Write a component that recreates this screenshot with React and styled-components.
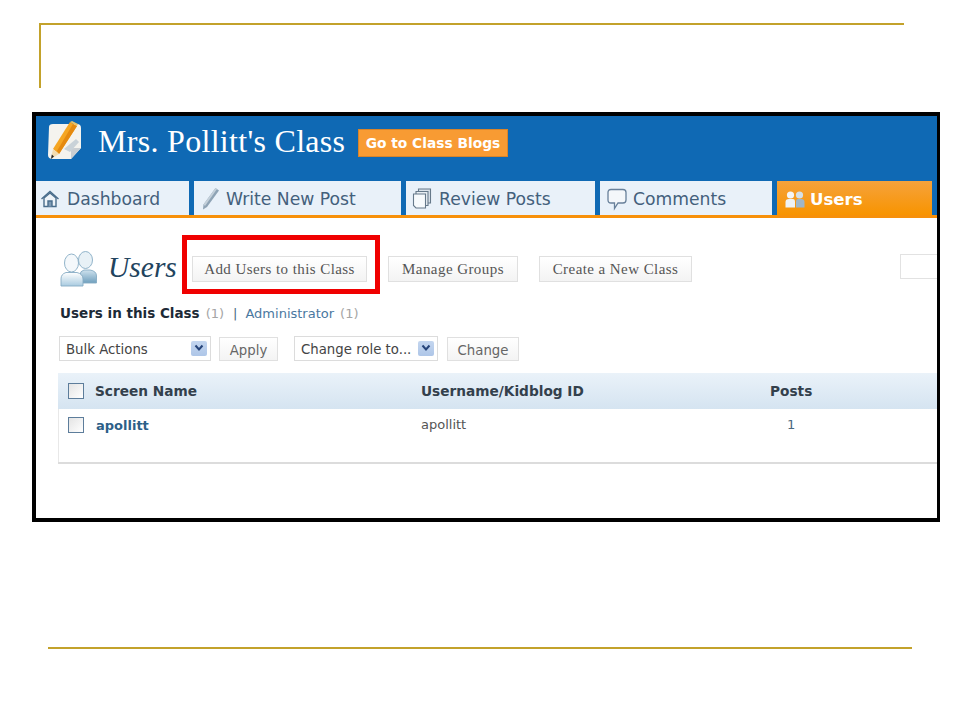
import React from 'react';
import styled, { createGlobalStyle } from 'styled-components';

const GlobalStyle = createGlobalStyle`
  html, body {
    margin: 0;
    padding: 0;
    background: #fff;
  }
`;

const Slide = styled.div`
  width: 960px;
  height: 720px;
  padding-top: 23px;
  box-sizing: border-box;
  overflow: hidden;
`;

const TitleFrame = styled.div`
  margin-left: 39px;
  width: 865px;
  height: 65px;
  box-sizing: border-box;
  border-top: 2px solid #c3a22b;
  border-left: 2px solid #c3a22b;
`;

const Shot = styled.div`
  margin: 24px 0 0 32px;
  width: 908px;
  height: 410px;
  box-sizing: border-box;
  border: solid #000;
  border-width: 4px 3px 4px 4px;
  overflow: hidden;
  background: #fff;
`;

const FootRule = styled.div`
  margin: 125px 0 0 48px;
  width: 864px;
  height: 2px;
  background: #c3a22b;
`;

const Header = styled.header`
  background: #0f69b4;
  height: 102px;
  box-sizing: border-box;
  border-bottom: 3px solid #f7900a;
  display: flex;
  flex-direction: column;
`;

const Brand = styled.div`
  height: 65px;
  flex: none;
  box-sizing: border-box;
  padding: 0 0 10px 10px;
  display: flex;
  align-items: center;
`;

const LogoWrap = styled.span`
  display: flex;
  margin-top: -6px;
`;

const Title = styled.h1`
  margin: -5px 13px 0 16px;
  width: 247px;
  font: 400 32px 'Liberation Serif', serif;
  letter-spacing: 0.3px;
  color: #fff;
  white-space: nowrap;
`;

const BlogsButton = styled.div`
  width: 150px;
  height: 28px;
  box-sizing: border-box;
  margin-top: -1px;
  background: #f89b33;
  border: 1px solid #d8842a;
  color: #fff;
  font: 700 13.8px/26px 'DejaVu Sans', sans-serif;
  text-align: center;
  white-space: nowrap;
`;

const Tabs = styled.nav`
  display: flex;
  gap: 5px;
  height: 34px;
`;

const Tab = styled.div`
  width: ${p => p.$w}px;
  box-sizing: border-box;
  padding: 2px 0 0 ${p => p.$pad}px;
  display: flex;
  align-items: center;
  gap: ${p => p.$gap}px;
  background: ${p => (p.$active ? 'linear-gradient(#f5a23c, #f89400)' : '#e9f1f9')};
  color: ${p => (p.$active ? '#fff' : '#43607c')};
  font: ${p => (p.$active ? '700 16.6px' : '400 17.2px')} 'DejaVu Sans', sans-serif;
  white-space: nowrap;
`;

const Main = styled.main`
  padding: 33px 0 0 24px;
`;

const TopRow = styled.div`
  display: flex;
  align-items: center;
  height: 36px;
  width: 960px;
`;

const Heading = styled.h2`
  margin: -4px 15px 0 11px;
  width: 69px;
  font: italic 400 29.5px 'Liberation Serif', serif;
  color: #22445e;
  white-space: nowrap;
`;

const ActionButton = styled.div`
  position: relative;
  width: ${p => p.$w}px;
  margin-right: ${p => p.$mr}px;
  height: 26px;
  box-sizing: border-box;
  background: linear-gradient(#fff, #f3f3f3);
  border: 1px solid #e0e0e0;
  color: #555;
  font: 400 15px/24px 'Liberation Serif', serif;
  letter-spacing: 0.43px;
  text-align: center;
  white-space: nowrap;
  flex: none;
`;

const Highlight = styled.div`
  position: absolute;
  left: -11px;
  right: -14px;
  top: -22px;
  bottom: -13px;
  border: 5px solid #f00000;
`;

const SearchBox = styled.div`
  margin-left: 208px;
  width: 60px;
  height: 25px;
  box-sizing: border-box;
  border: 1px solid #e2e2e2;
  flex: none;
  position: relative;
  top: -3px;
`;

const ViewFilter = styled.div`
  margin-top: 17px;
  height: 18px;
  display: flex;
  align-items: center;
  gap: 6px;
  font: 400 13px 'DejaVu Sans', sans-serif;
  color: #a5a5a5;
  white-space: nowrap;
`;

const Current = styled.span`
  font-size: 13.5px;
  font-weight: 700;
  color: #1d2a36;
`;

const FilterLink = styled.span`
  color: #4a78a0;
`;

const Divider = styled.span`
  color: #4a6880;
  margin: 0 2px 0 3px;
`;

const Controls = styled.div`
  margin: 14px 0 0 -1px;
  display: flex;
  align-items: center;
  height: 25px;
`;

const SelectBox = styled.div`
  width: ${p => p.$w}px;
  margin-right: ${p => p.$mr}px;
  height: 25px;
  box-sizing: border-box;
  border: 1px solid #dcdcdc;
  padding: 2px 3px 0 6px;
  display: flex;
  align-items: center;
  justify-content: space-between;
  font: 400 13.3px 'DejaVu Sans', sans-serif;
  color: #444;
  white-space: nowrap;
  flex: none;
`;

const Arrow = styled.span`
  width: 16px;
  height: 15px;
  margin-top: -3px;
  background: linear-gradient(#c4d6ef, #aec6e8);
  border-radius: 2px;
  display: flex;
  align-items: center;
  justify-content: center;
`;

const SmallButton = styled.div`
  width: ${p => p.$w}px;
  margin-right: ${p => p.$mr}px;
  height: 24px;
  box-sizing: border-box;
  border: 1px solid #e0e0e0;
  background: linear-gradient(#fff, #f4f4f4);
  font: 400 13.3px/25px 'DejaVu Sans', sans-serif;
  color: #666;
  text-align: center;
  flex: none;
`;

const Table = styled.div`
  margin: 12px 0 0 -2px;
  width: 879px;
  border-bottom: 2px solid #dcdcdc;
`;

const HeadRow = styled.div`
  height: 36px;
  display: grid;
  grid-template-columns: 363px 349px 1fr;
  align-items: center;
  background: linear-gradient(#eaf2f9, #d5e4f1);
  font: 700 13.7px 'DejaVu Sans', sans-serif;
  color: #33404c;
`;

const BodyRow = styled.div`
  height: 53px;
  display: grid;
  grid-template-columns: 363px 349px 1fr;
  align-items: start;
  padding-top: 8px;
  box-sizing: border-box;
  box-shadow: inset 1px 0 #e8e8e8;
  font: 400 13px 'DejaVu Sans', sans-serif;
  color: #555;
`;

const NameCell = styled.div`
  display: flex;
  align-items: center;
  gap: 11px;
  padding-left: 10px;
`;

const Check = styled.span`
  width: 16px;
  height: 16px;
  box-sizing: border-box;
  border: 1px solid #5d7d9b;
  background: linear-gradient(135deg, #e4e4e4, #fff);
  flex: none;
`;

const UserLink = styled.span`
  margin-left: 1px;
  font-weight: 700;
  color: #2d5f88;
`;

const PostCount = styled.span`
  padding-left: 17px;
  color: #4a6880;
`;

const CellText = styled.span`
  line-height: 16px;
`;

const LogoIcon = () => (
  <svg width="36" height="40" viewBox="0 0 36 40">
    <path d="M3 6 Q3 3 7 3 H31 Q35 3 35 7 V27 L25 38 H7 Q2 38 2 34 Z" fill="#f4f3ee" />
    <path d="M25 38 V30 Q25 27 28 27 H35 Z" fill="#c9ced2" />
    <path d="M18 28 L30 18 L33 21 L24 31 Z" fill="#c9d2d8" />
    <path d="M7 28 L24 1 L31 5 L13 33 Z" fill="#f5a623" />
    <path d="M11 30 L27 3 L31 5 L13 33 Z" fill="#e58a10" />
    <path d="M24 1 L26 0 L32 3 L31 5 Z" fill="#e8c26a" />
    <path d="M7 28 L13 33 L5 38 Z" fill="#f3dcb0" />
    <path d="M5.8 33.5 L8 35.6 L5 38 Z" fill="#222" />
  </svg>
);

const HomeIcon = () => (
  <svg width="20" height="20" viewBox="0 0 20 20" fill="#eef3f8" stroke="#4a6d8c" strokeWidth="1.4">
    <path d="M1.5 10 L10 2.5 L18.5 10" fill="none" />
    <path d="M4 9 V17.5 H16 V9 L10 4 Z" />
    <path d="M8 17.5 V12 H12 V17.5" fill="#7f9bb5" />
  </svg>
);

const PencilIcon = () => (
  <svg width="20" height="24" viewBox="0 0 20 24">
    <path d="M14.5 1 L18 3.5 L6 20 L2 22.5 L2.5 17.5 Z" fill="#8ea3b5" />
    <path d="M14.5 1 L16 2 L4 19 L2.5 17.5 Z" fill="#c4d0da" />
  </svg>
);

const PagesIcon = () => (
  <svg width="20" height="22" viewBox="0 0 20 22" stroke="#66798a" strokeWidth="1.1">
    <path d="M6.5 1 H18.5 V15 H6.5 Z" fill="#dbe3ea" />
    <path d="M4 3.5 H16 V17.5 H4 Z" fill="#e7edf2" />
    <path d="M1.5 6 H13.5 V20 H4 L1.5 17.5 Z" fill="#f7fafc" />
  </svg>
);

const CommentIcon = () => (
  <svg width="20" height="23" viewBox="0 0 20 23">
    <path d="M4 1.5 H16 Q19 1.5 19 4.5 V12 Q19 15 16 15 H11 L7.5 20.5 V15 H4 Q1 15 1 12 V4.5 Q1 1.5 4 1.5 Z" fill="#f4f7fa" stroke="#68809a" strokeWidth="1.3" />
  </svg>
);

const TabUsersIcon = () => (
  <svg width="20" height="19" viewBox="0 0 20 19">
    <circle cx="5.5" cy="5" r="3.6" fill="#f4f6f8" />
    <circle cx="14.5" cy="5" r="3.6" fill="#d5e0e8" />
    <path d="M0.5 17.5 V12 Q0.5 9 4 9 H8 Q10 9 10 12 V17.5 Z" fill="#eef2f5" />
    <path d="M11 17.5 V12 Q11 9 13 9 H16 Q19.5 9 19.5 12 V17.5 Z" fill="#9fb6c8" />
  </svg>
);

const BigUsersIcon = () => (
  <svg width="37" height="36" viewBox="0 0 37 36">
    <defs>
      <linearGradient id="backUser" x1="0" y1="0" x2="0" y2="1">
        <stop offset="0" stopColor="#cfe2ee" />
        <stop offset="1" stopColor="#6f9fbd" />
      </linearGradient>
      <linearGradient id="frontUser" x1="0" y1="0" x2="0" y2="1">
        <stop offset="0" stopColor="#ffffff" />
        <stop offset="1" stopColor="#a9cbe0" />
      </linearGradient>
    </defs>
    <g stroke="#86abc4" strokeWidth="0.9">
      <ellipse cx="25.5" cy="9" rx="7" ry="8.5" fill="#e8f1f6" />
      <path d="M20 32 V24 Q20 20 24 19 H30 Q36.5 20 36.5 25 V32 Z" fill="url(#backUser)" />
      <ellipse cx="11.5" cy="12" rx="7" ry="9" fill="#f4f8fb" />
      <path d="M1 35 V28 Q1 23 6 21.5 H17 Q23 23 23 28 V35 Z" fill="url(#frontUser)" />
    </g>
  </svg>
);

const ChevronDown = () => (
  <svg width="10" height="8" viewBox="0 0 10 8">
    <path d="M1.5 1.5 L5 5.5 L8.5 1.5" fill="none" stroke="#27457a" strokeWidth="2" />
  </svg>
);

const App = () => {
  return (
    <Slide>
      <GlobalStyle />
      <TitleFrame />
      <Shot>
        <Header>
          <Brand>
            <LogoWrap><LogoIcon /></LogoWrap>
            <Title>Mrs. Pollitt's Class</Title>
            <BlogsButton>Go to Class Blogs</BlogsButton>
          </Brand>
          <Tabs>
            <Tab $w={153} $pad={4} $gap={7}><HomeIcon />Dashboard</Tab>
            <Tab $w={207} $pad={7} $gap={5}><PencilIcon />Write New Post</Tab>
            <Tab $w={189} $pad={6} $gap={7}><PagesIcon />Review Posts</Tab>
            <Tab $w={172} $pad={7} $gap={6}><CommentIcon />Comments</Tab>
            <Tab $w={155} $pad={8} $gap={5} $active><TabUsersIcon />Users</Tab>
          </Tabs>
        </Header>
        <Main>
          <TopRow>
            <BigUsersIcon />
            <Heading>Users</Heading>
            <ActionButton $w={175} $mr={21}>
              Add Users to this Class
              <Highlight />
            </ActionButton>
            <ActionButton $w={130} $mr={21}>Manage Groups</ActionButton>
            <ActionButton $w={153} $mr={0}>Create a New Class</ActionButton>
            <SearchBox />
          </TopRow>
          <ViewFilter>
            <Current>Users in this Class</Current>
            (1)
            <Divider>|</Divider>
            <FilterLink>Administrator</FilterLink>
            (1)
          </ViewFilter>
          <Controls>
            <SelectBox $w={152} $mr={8}>Bulk Actions<Arrow><ChevronDown /></Arrow></SelectBox>
            <SmallButton $w={59} $mr={16}>Apply</SmallButton>
            <SelectBox $w={144} $mr={9}>Change role to...<Arrow><ChevronDown /></Arrow></SelectBox>
            <SmallButton $w={72} $mr={0}>Change</SmallButton>
          </Controls>
          <Table>
            <HeadRow>
              <NameCell><Check />Screen Name</NameCell>
              <span>Username/Kidblog ID</span>
              <span>Posts</span>
            </HeadRow>
            <BodyRow>
              <NameCell><Check /><UserLink>apollitt</UserLink></NameCell>
              <CellText>apollitt</CellText>
              <PostCount>1</PostCount>
            </BodyRow>
          </Table>
        </Main>
      </Shot>
      <FootRule />
    </Slide>
  );
};

export default App;
